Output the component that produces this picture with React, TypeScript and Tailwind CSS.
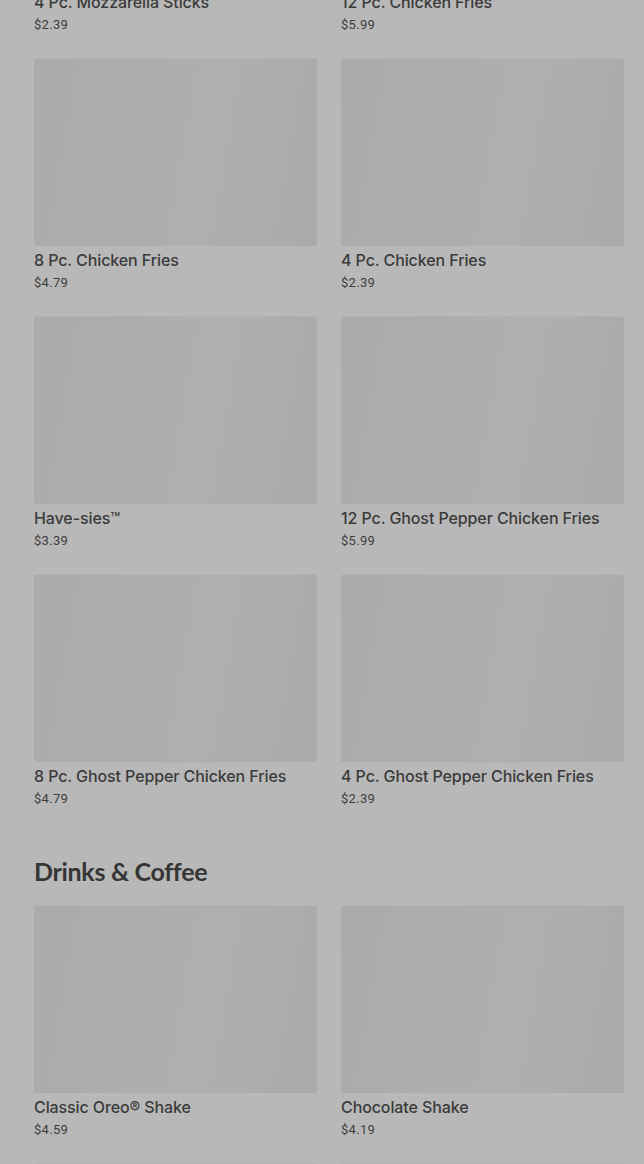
import React from "react";

type Item = { name: string; price: string };

const rows1: Item[][] = [
  [
    { name: "4 Pc. Mozzarella Sticks", price: "$2.39" },
    { name: "12 Pc. Chicken Fries", price: "$5.99" },
  ],
  [
    { name: "8 Pc. Chicken Fries", price: "$4.79" },
    { name: "4 Pc. Chicken Fries", price: "$2.39" },
  ],
  [
    { name: "Have-sies™", price: "$3.39" },
    { name: "12 Pc. Ghost Pepper Chicken Fries", price: "$5.99" },
  ],
  [
    { name: "8 Pc. Ghost Pepper Chicken Fries", price: "$4.79" },
    { name: "4 Pc. Ghost Pepper Chicken Fries", price: "$2.39" },
  ],
];

const drinks: Item[] = [
  { name: "Classic Oreo® Shake", price: "$4.59" },
  { name: "Chocolate Shake", price: "$4.19" },
  { name: "", price: "" },
  { name: "", price: "" },
];

function Card({ item }: { item: Item }) {
  return (
    <div className="flex flex-col">
      <div className="h-[188px] w-full rounded-[3px] bg-[#adadad] bg-[linear-gradient(100deg,#ababab_0%,#adadad_40%,#afafaf_60%,#aaaaaa_100%)] border-t border-[#b3b3b3]" />
      <div
        className="mt-[2px] h-[24px] leading-[24px] text-[16px] font-medium text-[#3b3b3b] tracking-[-0.1px] whitespace-nowrap"
        style={{ fontFamily: "Inter, Roboto, sans-serif" }}
      >
        {item.name}
      </div>
      <div className="mt-[1px] h-[20px] leading-[20px] text-[13px] tracking-[0.3px] text-[#3d3d3d]">
        {item.price}
      </div>
    </div>
  );
}

export default function App() {
  return (
    <div
      className="min-h-[1164px] h-[1164px] overflow-hidden bg-[#b8b8b8] pl-[34px] pr-[20px]"
      style={{ fontFamily: "Roboto, 'Liberation Sans', sans-serif" }}
    >
      <div className="-mt-[200px] grid grid-cols-2 gap-x-[24px] gap-y-[23px]">
        {rows1.flat().map((it, i) => (
          <Card key={i} item={it} />
        ))}
      </div>
      <h2
        className="mt-[47px] text-[25px] leading-[30px] font-bold text-[#353535] tracking-[-0.3px]"
        style={{ fontFamily: "Lato, Inter, sans-serif" }}
      >
        Drinks &amp; Coffee
      </h2>
      <div className="mt-[19px] grid grid-cols-2 gap-x-[24px] gap-y-[23px]">
        {drinks.map((it, i) => (
          <Card key={i} item={it} />
        ))}
      </div>
    </div>
  );
}
